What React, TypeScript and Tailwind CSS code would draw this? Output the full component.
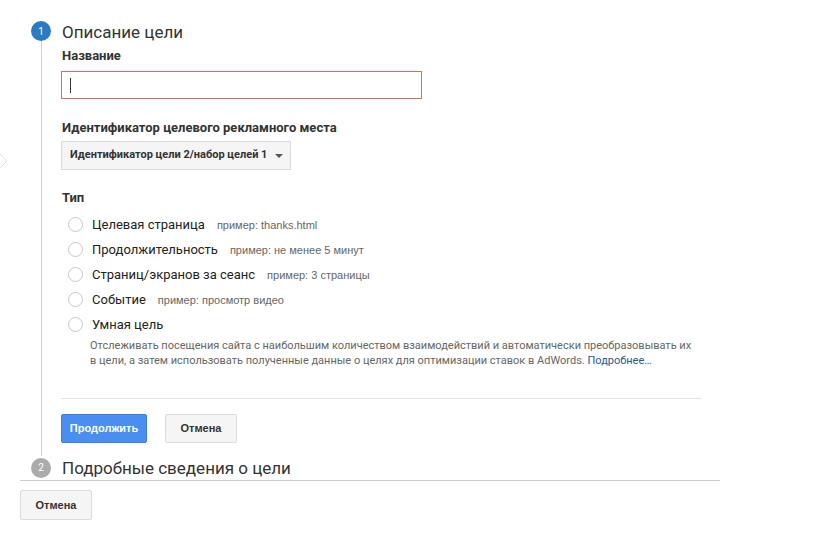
import React from "react";

const Radio = ({ label, hint }: { label: string; hint?: string }) => (
  <div className="flex items-center h-[25px] pl-[7px]">
    <span className="w-[15px] h-[15px] rounded-full border border-[#c8c8c8] bg-white shrink-0" />
    <span className="ml-[9px] text-[13px] text-[#222]">{label}</span>
    {hint && (
      <span
        className="ml-[12px] mt-[2px] text-[11px] text-[#666]"
        style={{ fontFamily: "'Liberation Sans', Arial, sans-serif" }}
      >
        {hint}
      </span>
    )}
  </div>
);

export default function App() {
  return (
    <div
      className="relative w-[834px] h-[538px] bg-white overflow-hidden"
      style={{ fontFamily: "Roboto, 'Noto Sans', Arial, sans-serif" }}
    >
      <svg className="absolute left-0 top-[149px]" width="10" height="24" viewBox="0 0 10 24">
        <path d="M-4 1 L7 12 L-4 23" fill="none" stroke="#e2e2e2" strokeWidth="1" />
      </svg>

      <div className="pl-[20px] pt-[21px]">
        {/* Step 1 */}
        <div className="flex pl-[11px]">
          <div className="flex flex-col items-center w-[20px] shrink-0">
            <div className="w-[20px] h-[20px] rounded-full bg-[#2b7ac4] text-white text-[10px] flex items-center justify-center">
              1
            </div>
            <div className="flex-1 w-px bg-[#cfcfcf]" />
          </div>
          <div className="ml-[10px] flex flex-col">
            <div className="text-[17px] leading-[22px] text-[#333] pl-px">Описание цели</div>
            <div className="mt-[5px] text-[13px] leading-[16px] font-bold text-[#333] pl-px">Название</div>
            <div className="mt-[7px] w-[361px] h-[28px] border border-[#db6a60] bg-white flex items-center pl-[8px]">
              <span className="w-px h-[15px] bg-[#333]" />
            </div>
            <div className="mt-[21px] text-[13px] leading-[16px] font-bold text-[#333] pl-px">
              Идентификатор целевого рекламного места
            </div>
            <div className="mt-[5px] w-[230px] h-[29px] border border-[#dcdcdc] bg-[#f5f5f5] flex items-center pl-[8px]">
              <span className="text-[11px] font-bold text-[#333] whitespace-nowrap">
                Идентификатор цели 2/набор целей 1
              </span>
              <svg className="ml-[8px] shrink-0" width="8" height="4" viewBox="0 0 8 4">
                <path d="M0 0 L8 0 L4 4 Z" fill="#555" />
              </svg>
            </div>
            <div className="mt-[20px] text-[13px] leading-[16px] font-bold text-[#333] pl-px">Тип</div>
            <div className="mt-[6px] flex flex-col">
              <Radio label="Целевая страница" hint="пример: thanks.html" />
              <Radio label="Продолжительность" hint="пример: не менее 5 минут" />
              <Radio label="Страниц/экранов за сеанс" hint="пример: 3 страницы" />
              <Radio label="Событие" hint="пример: просмотр видео" />
              <Radio label="Умная цель" />
            </div>
            <p className="mt-[1px] ml-[29px] w-[610px] text-[11px] leading-[15px] text-[#666]">
              Отслеживать посещения сайта с наибольшим количеством взаимодействий и автоматически преобразовывать их
              в цели, а затем использовать полученные данные о целях для оптимизации ставок в AdWords.{" "}
              <span className="text-[#1f5a96]">Подробнее…</span>
            </p>
            <div className="mt-[30px] w-[640px] h-px bg-[#e3e3e3]" />
            <div
              className="mt-[15px] mb-[13px] flex gap-[18px]"
              style={{ fontFamily: "'Liberation Sans', Arial, sans-serif" }}
            >
              <button className="w-[86px] h-[29px] rounded-[2px] bg-[#4a8ef0] border border-[#3c7fe0] text-white text-[11px] font-bold">
                Продолжить
              </button>
              <button className="w-[72px] h-[29px] rounded-[2px] bg-[#f5f5f5] border border-[#dcdcdc] text-[#333] text-[11px] font-bold">
                Отмена
              </button>
            </div>
          </div>
        </div>

        {/* Step 2 */}
        <div className="flex pl-[11px] items-center">
          <div className="w-[20px] h-[20px] rounded-full bg-[#ababab] text-white text-[10px] flex items-center justify-center shrink-0">
            2
          </div>
          <div className="ml-[11px] text-[17px] leading-[22px] text-[#333] mt-[1px]">Подробные сведения о цели</div>
        </div>

        <div className="mt-[1px] w-[700px] h-px bg-[#cccccc]" />
        <div className="mt-[9px]" style={{ fontFamily: "'Liberation Sans', Arial, sans-serif" }}>
          <button className="w-[72px] h-[30px] rounded-[2px] bg-[#f5f5f5] border border-[#dcdcdc] text-[#333] text-[11px] font-bold">
            Отмена
          </button>
        </div>
      </div>
    </div>
  );
}
